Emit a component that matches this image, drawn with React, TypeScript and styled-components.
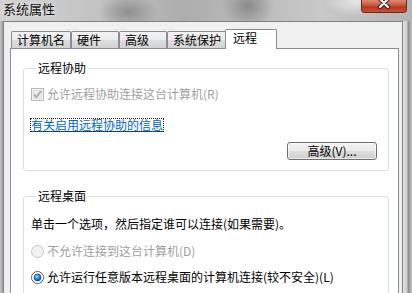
import React from 'react';
import styled, { createGlobalStyle } from 'styled-components';

const GlobalStyle = createGlobalStyle`
  html, body { margin: 0; padding: 0; background: #bdbdbd; }
  body {
    font-family: "Noto Sans CJK SC", "Noto Sans", sans-serif;
    font-size: 12px;
    color: #000;
  }
`;

const Window = styled.div`
  width: 412px;
  height: 293px;
  overflow: hidden;
  display: flex;
  flex-direction: column;
  background:
    radial-gradient(ellipse 30px 18px at 128px 12px, #8f8f8f, transparent),
    radial-gradient(ellipse 26px 22px at 248px 6px, #8a8a8a, transparent),
    radial-gradient(ellipse 30px 14px at 355px 2px, #e6e6e6, transparent),
    linear-gradient(90deg, #d2d2d2 0%, #c2c2c2 25%, #adadad 45%, #bababa 60%, #c9c9c9 78%, #b4b4b4 100%);
`;

const TitleBar = styled.div`
  height: 21px;
  display: flex;
  align-items: flex-start;
  flex-shrink: 0;
`;

const Title = styled.div`
  padding: 1px 0 0 3px;
  font-size: 13px;
  line-height: 16px;
  color: #111;
  text-shadow: 0 0 6px rgba(255, 255, 255, 0.9);
`;

const CloseButton = styled.div`
  margin-left: auto;
  margin-right: 5px;
  width: 46px;
  height: 13px;
  box-sizing: border-box;
  border: 1px solid #6b2a1e;
  border-top: 0;
  border-radius: 0 0 4px 4px;
  background: linear-gradient(#d98b78 0%, #c9553c 45%, #b4361d 60%, #c4543a 100%);
  display: flex;
  justify-content: center;
`;

const Body = styled.div`
  flex: 1;
  display: flex;
  min-height: 0;
`;

const LeftFrame = styled.div`
  width: 3px;
  background: linear-gradient(90deg, #c6c6c6, #9b9b9b);
`;

const Client = styled.div`
  width: 400px;
  box-sizing: border-box;
  border: 1px solid #7f8285;
  border-bottom: 0;
  background: #f0f0f0;
  padding: 7px 3px 0 6px;
  display: flex;
  flex-direction: column;
`;

const RightFrame = styled.div`
  flex: 1;
  background: linear-gradient(90deg, #e2e2e2 0%, #cfcfcf 40%, #8e8e8e 60%, #a8a8a8 80%, #c8c8c8 100%);
`;

const TabRow = styled.div`
  height: 19px;
  display: flex;
  align-items: flex-end;
  padding-left: 1px;
  flex-shrink: 0;
`;

const Tab = styled.div<{ $active?: boolean }>`
  position: relative;
  box-sizing: border-box;
  min-width: ${p => (p.$active ? 52 : 48)}px;
  height: ${p => (p.$active ? 20 : 17)}px;
  margin: 0 ${p => (p.$active ? -2 : 0)}px ${p => (p.$active ? -1 : 0)}px;
  padding: 0 ${p => (p.$active ? 7 : 5)}px;
  border: 1px solid #898c95;
  border-bottom: 0;
  border-radius: 2px 2px 0 0;
  line-height: ${p => (p.$active ? 16 : 15)}px;
  white-space: nowrap;
  z-index: ${p => (p.$active ? 2 : 0)};
  background: ${p => (p.$active ? '#fff' : 'linear-gradient(#f3f3f3 0%, #ebebeb 50%, #dedede 51%, #d2d2d2 100%)')};
`;

const Panel = styled.div`
  flex: 1;
  position: relative;
  z-index: 1;
  background: #fff;
  border: 1px solid #898c95;
  border-bottom: 0;
  padding: 0 9px 0 12px;
`;

const Group = styled.fieldset<{ $gap: number }>`
  margin: ${p => p.$gap}px 0 0 0;
  padding: 0 10px 10px 7px;
  min-width: 0;
  border: 1px solid #d5dfe5;
  border-radius: 3px;
`;

const Legend = styled.legend`
  margin-left: 5px;
  padding: 0 2px;
  font-size: 12px;
  line-height: 14px;
`;

const Row = styled.div<{ $top: number; $disabled?: boolean }>`
  display: flex;
  align-items: center;
  gap: 3px;
  margin-top: ${p => p.$top}px;
  height: 14px;
  line-height: 14px;
  white-space: nowrap;
  color: ${p => (p.$disabled ? '#a0a0a0' : '#000')};
`;

const Link = styled.span`
  color: #0066cc;
  text-decoration: underline;
  outline: 1px dotted #222;
  line-height: 12px;
`;

const ButtonRow = styled.div`
  display: flex;
  justify-content: flex-end;
  margin-top: 10px;
  padding-right: 1px;
`;

const Button = styled.div`
  width: 90px;
  height: 18px;
  box-sizing: border-box;
  border: 1px solid #707070;
  border-radius: 3px;
  background: linear-gradient(#f2f2f2 0%, #ebebeb 49%, #dddddd 50%, #cfcfcf 100%);
  box-shadow: inset 0 0 0 1px rgba(255, 255, 255, 0.6);
  display: flex;
  align-items: center;
  justify-content: center;
  line-height: 14px;
`;

const CloseGlyph = () => (
  <svg width="16" height="9" viewBox="0 0 16 9">
    <path d="M4 -1 L12 7 M12 -1 L4 7" stroke="#3a1a12" strokeWidth="4" strokeLinecap="round" />
    <path d="M4 -1 L12 7 M12 -1 L4 7" stroke="#fff" strokeWidth="2.2" strokeLinecap="round" />
  </svg>
);

const CheckBox = ({ disabled, checked }: { disabled?: boolean; checked?: boolean }) => (
  <svg width="13" height="13" viewBox="0 0 13 13" style={{ flexShrink: 0 }}>
    <rect x="0.5" y="0.5" width="12" height="12" fill="#f4f4f4" stroke={disabled ? '#b8b8b8' : '#8e8f8f'} />
    <rect x="2.5" y="2.5" width="8" height="8" fill="#ececec" stroke="#dedede" />
    {checked && (
      <path d="M3 6.5 L5.3 9 L10 3.2" fill="none" stroke={disabled ? '#a8a8a8' : '#4a5f97'} strokeWidth="1.8" />
    )}
  </svg>
);

const Radio = ({ disabled, checked }: { disabled?: boolean; checked?: boolean }) => (
  <svg width="13" height="13" viewBox="0 0 13 13" style={{ flexShrink: 0 }}>
    <defs>
      <radialGradient id="dot" cx="0.4" cy="0.35" r="0.7">
        <stop offset="0" stopColor="#a6e0ff" />
        <stop offset="0.5" stopColor="#2a8ae0" />
        <stop offset="1" stopColor="#0b3f8f" />
      </radialGradient>
    </defs>
    <circle cx="6.5" cy="6.5" r="6" fill={disabled ? '#f2f2f2' : '#e9eef3'} stroke={disabled ? '#c4c4c4' : '#4c5968'} />
    {!disabled && <circle cx="6.5" cy="6.5" r="5" fill="none" stroke="#fff" />}
    {checked && <circle cx="6.5" cy="6.5" r="3.4" fill="url(#dot)" stroke="#1d4f86" strokeWidth="0.8" />}
  </svg>
);

const tabs = ['计算机名', '硬件', '高级', '系统保护', '远程'];

export default function App() {
  return (
    <>
      <GlobalStyle />
      <Window>
        <TitleBar>
          <Title>系统属性</Title>
          <CloseButton>
            <CloseGlyph />
          </CloseButton>
        </TitleBar>
        <Body>
          <LeftFrame />
          <Client>
            <TabRow>
              {tabs.map(t => (
                <Tab key={t} $active={t === '远程'}>{t}</Tab>
              ))}
            </TabRow>
            <Panel>
              <Group $gap={12}>
                <Legend>远程协助</Legend>
                <Row $top={12} $disabled>
                  <CheckBox disabled checked />
                  允许远程协助连接这台计算机(R)
                </Row>
                <Row $top={17}>
                  <Link>有关启用远程协助的信息</Link>
                </Row>
                <ButtonRow>
                  <Button>高级(V)...</Button>
                </ButtonRow>
              </Group>
              <Group $gap={18}>
                <Legend>远程桌面</Legend>
                <Row $top={14}>单击一个选项，然后指定谁可以连接(如果需要)。</Row>
                <Row $top={13} $disabled>
                  <Radio disabled />
                  不允许连接到这台计算机(D)
                </Row>
                <Row $top={12}>
                  <Radio checked />
                  允许运行任意版本远程桌面的计算机连接(较不安全)(L)
                </Row>
              </Group>
            </Panel>
          </Client>
          <RightFrame />
        </Body>
      </Window>
    </>
  );
}
